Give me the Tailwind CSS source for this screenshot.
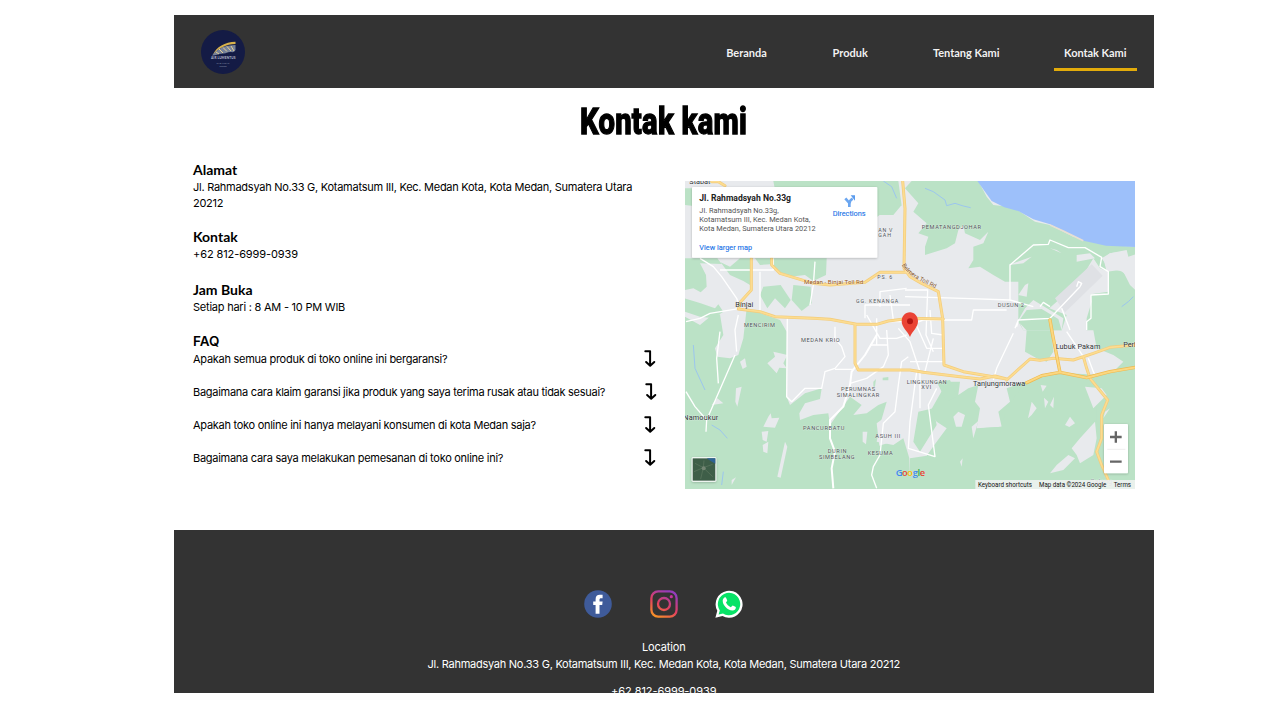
<!DOCTYPE html>
<html lang="id">
<head>
<meta charset="utf-8">
<title>Kontak Kami</title>
<script src="https://cdn.jsdelivr.net/npm/@tailwindcss/browser@4"></script>
</head>
<body class="bg-white text-black font-['Inter',sans-serif] h-[708px] overflow-hidden">
<svg class="hidden">
  <symbol id="turn" viewBox="0 0 14 18"><path d="M1.300 1.300H6.100V15M2.100 12L6.200 15.800L10.300 12" fill="none" stroke="#000" stroke-width="2" stroke-linecap="round" stroke-linejoin="round"/></symbol>
</svg>
<div class="ml-[173.5px] mt-[14.5px] w-[980.5px] h-[678.5px] overflow-hidden flex flex-col">
  <header class="h-[73.5px] shrink-0 bg-[#333] flex items-start justify-between pl-[27.5px] pr-[17px]">
    <svg class="mt-[15px] size-[44px]" viewBox="0 0 44 44">
      <circle cx="22" cy="22" r="22" fill="#141b45"/>
      <path d="M12 25C15 17 24 12 34.500 11.800V14C25 14 18 18 12 25Z" fill="#d9b24a"/>
      <path d="M11 25.500C16 19 24 15 34.500 15V20C33 23 31 22 29 22C26 22 25 24 22 23.500C17 24 15 25.500 11 25.500Z" fill="#77829a"/>
      <path d="M15 22l3 2M18 19l4 4M22 17.500l4 4M26 16.500l4 4.500M30 16l3 5" stroke="#e7d193" stroke-width="1"/>
      <text x="10" y="28.700" font-family="Lato" font-weight="700" font-size="3.200" fill="#b9bfd0" textLength="24.500">AIR LUMENTUS</text>
      <text x="15.500" y="34.300" font-family="Lato" font-size="2.400" fill="#8f96b0" textLength="13">THE LIGHT</text>
      <text x="18.500" y="36.800" font-family="Lato" font-size="2.200" fill="#8f96b0" textLength="7">STORE</text>
    </svg>
    <nav class="flex gap-[43.5px] mt-[26px] font-['Lato'] font-bold text-[11px] leading-[24px] text-white/95 text-center">
      <a class="w-[63px] h-[30px]">Beranda</a>
      <a class="w-[57.500px] h-[30px]">Produk</a>
      <a class="w-[87.500px] h-[30px] whitespace-nowrap">Tentang Kami</a>
      <a class="w-[83.500px] h-[30px] border-b-3 border-[#e2ab0b] whitespace-nowrap tracking-[-0.05px]">Kontak Kami</a>
    </nav>
  </header>
  <h1 class="h-[66px] pt-[2px] shrink-0 flex items-center justify-center font-['Roboto'] font-extrabold text-[36.500px] whitespace-nowrap"><span class="scale-x-[.8] [-webkit-text-stroke:1.3px_#000] tracking-[.35px]">Kontak kami</span></h1>
  <main class="h-[376px] shrink-0 flex pl-[19.5px] text-[11px]">
    <section class="w-[466px] mt-[6.500px] leading-[16.5px] tracking-[-0.275px]">
      <h2 class="font-['Lato'] font-bold text-[14px] leading-[17px] h-[18px] tracking-normal">Alamat</h2>
      <p class="h-[49.500px] w-[455px] tracking-[-0.262px]">Jl. Rahmadsyah No.33 G, Kotamatsum III, Kec. Medan Kota, Kota Medan, Sumatera Utara 20212</p>
      <h2 class="font-['Lato'] font-bold text-[14px] leading-[17px] h-[18px] tracking-normal">Kontak</h2>
      <p class="h-[34.500px] tracking-[-0.1px]">+62 812-6999-0939</p>
      <h2 class="font-['Lato'] font-bold text-[14px] leading-[17px] h-[18px] tracking-normal">Jam Buka</h2>
      <p class="h-[34.500px] tracking-[-0.23px]">Setiap hari : 8 AM - 10 PM WIB</p>
      <h2 class="font-semibold text-[13.500px] leading-[17px] h-[18px] tracking-normal">FAQ</h2>
      <div class="flex flex-col gap-[16.500px]">
        <div class="flex justify-between pr-[1.500px]"><p>Apakah semua produk di toko online ini bergaransi?</p><svg class="w-[14px] h-[18px] -my-px"><use href="#turn"/></svg></div>
        <div class="flex justify-between pr-[.5px]"><p>Bagaimana cara klaim garansi jika produk yang saya terima rusak atau tidak sesuai?</p><svg class="w-[14px] h-[18px] -my-px"><use href="#turn"/></svg></div>
        <div class="flex justify-between pr-[1.500px]"><p>Apakah toko online ini hanya melayani konsumen di kota Medan saja?</p><svg class="w-[14px] h-[18px] -my-px"><use href="#turn"/></svg></div>
        <div class="flex justify-between pr-[1.500px]"><p>Bagaimana cara saya melakukan pemesanan di toko online ini?</p><svg class="w-[14px] h-[18px] -my-px"><use href="#turn"/></svg></div>
      </div>
    </section>
    <svg class="ml-[26px] mt-[26.500px] w-[450px] h-[308px] shrink-0" viewBox="15 18 1350 924" font-family="Roboto">
      <defs><filter id="sh" x="-10%" y="-10%" width="120%" height="130%"><feDropShadow dx="0" dy="2" stdDeviation="3" flood-opacity=".25"/></filter></defs>
      <rect x="14" y="18" width="1352" height="925" fill="#e8eaed"/>
      <!-- vegetation -->
      <g fill="#bbe2c6">
        <path d="M280 18H655L665 92L640 88L592 125H300ZM14 40H60V95L14 90ZM592 75L665 90L640 120H592Z"/>
        <path d="M14 250H112L125 267L60 265L78 300L80 335L62 352L40 340L14 345ZM14 370L62 385L105 400L115 388L130 410L100 430L60 425L14 410ZM122 262L150 275L180 250H210V330L190 318L150 300ZM225 250H440L438 300L400 318L375 300L330 305L300 292L270 268L240 270ZM250 335L302 330L332 375L315 400L285 370L262 400L240 360ZM340 330L392 335L395 385L365 408L335 375Z"/>
        <path d="M14 425L60 450L90 425L120 418L130 480L105 520L112 545L150 550L175 540L190 490L200 400L235 412L300 435L320 470V665L330 690L375 655L425 640L420 672L375 685L358 715L360 735L400 720L445 715L450 750L510 665L545 690L520 720L560 715L595 690L620 680L600 750L590 800L640 810L670 790L688 850L691 943H14Z"/>
        <path d="M580 620L588 612L585 635L580 635ZM608 608L625 606V616L608 616Z"/>
        <path d="M735 18H895L920 65L940 90L1000 97L1065 140L1110 150L1180 185L1280 210L1366 215V238L1345 245L1340 225L1290 235L1265 250L1285 280L1330 290L1350 330L1366 345V466H1220V430L1235 380L1232 358L1285 350V290L1260 280L1240 250L1210 300L1130 380L1108 400L1160 420L1145 466H1030L1015 440V320H975L940 300L900 275L865 280L880 255V215L910 205L925 170L900 195L855 175L850 150L835 165L825 205L800 220L735 240V215L745 185L715 175L740 145L700 110L715 85L675 40L695 18Z"/>
        <path d="M1040 465H1114L1120 530L1100 560L1070 550L1035 530ZM1240 465H1366V943H690V850L740 842L770 800L800 760L770 740L750 710L790 640L800 620L840 620L835 660L865 640L895 630L885 680L900 700L890 760L965 755L955 710L990 680L980 640L1050 615L1115 592L1260 600L1300 590L1330 560L1300 540L1250 520Z"/>
        <path d="M1030 630L1100 600H1250V740L1366 800V943H900V760L965 755L980 700Z"/>
        <path d="M715 710L760 700L770 750L720 830L700 800ZM770 620L810 615L830 665L800 680Z"/>
      </g>
      <g fill="#e8eaed">
        <path d="M262 565L285 545L280 530L300 535L322 540L310 565L320 580L298 578L290 595ZM168 640L185 635L172 695L166 680ZM180 560L195 550L200 575L188 582ZM112 670L130 685L95 690ZM265 725L272 715L275 730L298 728L285 758L250 755ZM245 770L265 768L260 800L248 795ZM315 800L322 815L302 908L292 905ZM248 810L265 800L262 835L250 830ZM548 770L562 770L558 808L548 800ZM155 915L168 907L155 930ZM590 745L645 705L640 760L610 780L635 800L598 812Z"/>
        <path d="M820 725L835 710L855 720L845 755L828 755ZM875 755L895 738L880 790ZM840 860L848 850L845 875ZM1044 730L1055 680L1070 700L1055 720ZM1082 630L1100 632L1088 650ZM1092 668L1105 680L1095 700ZM1110 690L1122 665L1120 700ZM1155 750L1170 725L1185 745L1168 756ZM1215 635L1265 640L1280 660L1240 700ZM1175 820L1200 790L1245 740L1250 790L1240 840L1200 865L1190 840ZM1110 895L1130 870L1165 840L1185 850L1150 885ZM1270 730L1290 700L1275 710Z"/>
        <path d="M1015 435L1035 400L1060 375L1150 430L1145 466L1030 466ZM1110 220L1130 225L1145 235ZM1190 240L1230 235L1245 250L1190 260ZM1270 250L1290 235L1340 228L1345 270L1365 265L1350 310L1320 285L1280 290ZM985 270L1055 245L1030 265ZM1035 330L1045 325L1040 365L1015 360Z"/>
      </g>
      <path d="M1015 440L1040 405L1085 402L1135 432L1145 466H1040Z" fill="#bbe2c6"/>
      <path d="M1125 370L1235 268L1268 302L1155 412Z" fill="#dfe1e5"/>
      <path d="M892 18H1366V216L1278 212L1210 197L1150 168L1110 148L1060 133L1015 108L973 97L935 78Z" fill="#9dc0fa"/>
      <path d="M1110 150L1150 168L1210 197" stroke="#e7dfd3" stroke-width="5" fill="none"/>
      <path d="M735 40L760 50L795 75L800 92L825 85L850 93L872 98M610 18L635 35L650 70M1325 395L1345 380L1360 365M95 750L120 765L142 790M40 510L45 580L75 645M130 890L125 930" stroke="#9cc6ee" stroke-width="3" fill="none"/>
      <!-- minor roads -->
      <g fill="none" stroke="#fff" stroke-width="4" stroke-linejoin="round">
        <path d="M60 250L100 275L125 305L170 370L180 400L90 415L60 430L18 440M120 470L110 550L115 625M170 530L165 465L175 420M165 540L80 735L45 695L18 650M80 735L78 770M120 285H280V250M240 290L240 410M322 430L320 665L335 680L375 640L425 640L435 590L465 580L495 545L485 515L465 490V455M390 390L400 330L405 260"/>
        <path d="M590 480L555 540L515 590L510 630L490 695L450 735V790L465 830L455 880L460 940" stroke-width="6"/>
        <path d="M510 625L560 610L610 575L625 540L620 465M465 583H520M555 430V390H690M600 395V350L680 340M640 435L630 360M685 545L665 560L655 630L645 710L610 745L600 840L580 875L575 900L590 940M570 510L625 510M560 420L600 490H650L680 480M620 440H680M590 430V510"/>
        <path d="M675 345H743L738 480L760 530M675 365L850 370L990 375L1060 395M675 455L730 435H875L880 405H980M750 405L755 475L790 480M655 460L690 500L720 590V700M700 430L740 520H790M690 560H790M710 590L690 740L685 820L765 845L745 690L770 640M735 590L760 490M1010 455L1015 435L1110 430L1200 335M1015 435L1005 460M1000 475L950 580L940 615M990 375V270L1060 210L1105 208L1110 195L1165 218H1215L1265 247L1260 275L1285 290V357L1233 360V430L1220 440V465M1110 395L1090 382L1080 395M1145 400L1170 465M1160 470L1210 545M1225 550L1240 590L1245 600M1200 335L1205 325L1195 320L1190 335"/>
      </g>
      <!-- highways -->
      <g fill="none" stroke-linejoin="round" stroke-linecap="round">
        <path d="M214 250V345L182 380L175 402L240 410L285 425L400 430L450 433L530 448L590 448L625 438L690 430L790 432M275 250L275 270L300 295L400 325L450 330L555 322L600 292H690M668 18L675 100L672 280L690 305L725 325L775 350L788 430L792 570L850 590L980 612L945 603L900 612L840 605L730 592L690 585L535 585L525 565V450M95 20H115L135 32M980 615L1050 552L1080 556L1120 550L1180 555L1240 535L1290 517L1366 510M1210 545L1220 580L1230 610L1283 675L1265 720V790L1250 830L1265 870L1285 915" stroke="#f3cc7b" stroke-width="9"/>
        <path d="M214 250V345L182 380L175 402L240 410L285 425L400 430L450 433L530 448L590 448L625 438L690 430L790 432M275 250L275 270L300 295L400 325L450 330L555 322L600 292H690M668 18L675 100L672 280L690 305L725 325L775 350L788 430L792 570L850 590L980 612L945 603L900 612L840 605L730 592L690 585L535 585L525 565V450M95 20H115L135 32M980 615L1050 552L1080 556L1120 550L1180 555L1240 535L1290 517L1366 510M1210 545L1220 580L1230 610L1283 675L1265 720V790L1250 830L1265 870L1285 915" stroke="#fcdc90" stroke-width="5"/>
        <path d="M1110 435L1118 480L1140 592M1040 623L1085 602L1140 592L1220 608L1290 590L1366 577" stroke="#eeb94f" stroke-width="10"/>
        <path d="M1110 435L1118 480L1140 592M1040 623L1085 602L1140 592L1220 608L1290 590L1366 577" stroke="#fbd780" stroke-width="6"/>
      </g>
      <!-- place names -->
      <g font-size="18" fill="#4f5358" stroke="#fff" stroke-width="2" stroke-opacity=".5" paint-order="stroke">
        <text x="528" y="383" font-size="16" textLength="127">GG. KENANGA</text>
        <text x="192" y="457" font-size="17" textLength="93">MENCIRIM</text>
        <text x="592" y="312" font-size="16" textLength="45">PS. 6</text>
        <text x="595" y="171" font-size="16" textLength="42">AN V</text>
        <text x="595" y="187" font-size="16" textLength="38">GAH</text>
        <text x="725" y="161" font-size="17" textLength="178">PEMATANGDJOHAR</text>
        <text x="953" y="397" font-size="17" textLength="79">DUSUN 2</text>
        <text x="363" y="501" font-size="17" textLength="116">MEDAN KRIO</text>
        <text x="483" y="649" font-size="17" textLength="102">PERUMNAS</text>
        <text x="470" y="665" font-size="17" textLength="128">SIMALINGKAR</text>
        <text x="369" y="765" font-size="17" textLength="124">PANCURBATU</text>
        <text x="586" y="788" font-size="17" textLength="75">ASUH III</text>
        <text x="443" y="834" font-size="17" textLength="57">DURIN</text>
        <text x="417" y="851" font-size="17" textLength="107">SIMBELANG</text>
        <text x="563" y="841" font-size="17" textLength="75">KESUMA</text>
        <text x="680" y="626" font-size="17" textLength="120">LINGKUNGAN</text>
        <text x="724" y="643" font-size="17" textLength="30">XVI</text>
        <g fill="#303438" font-size="22">
          <text x="28" y="27" textLength="63">Stabat</text>
          <text x="166" y="396" textLength="54">Binjai</text>
          <text x="10" y="736" textLength="105">Namoukur</text>
          <text x="879" y="633" textLength="157">Tanjungmorawa</text>
          <text x="1127" y="522" textLength="134">Lubuk Pakam</text>
          <text x="1330" y="517" textLength="68">Perbau</text>
          <text x="1230" y="928" fill="#9aa0a6" textLength="66">Galang</text>
        </g>
        <path id="toll" d="M664 266C680 302 718 318 790 350" fill="none" stroke="none"/>
        <text fill="#7d4c20" font-size="18"><textPath href="#toll" startOffset="4">Belmera Toll Rd</textPath></text>
        <text x="372" y="327" fill="#955519" font-size="18.500" textLength="178">Medan - Binjai Toll Rd</text>
      </g>
      <!-- marker -->
      <path d="M690 412C675 412 665 424 665 439C665 458 684 470 690 486C696 470 714 458 714 439C714 424 704 412 690 412Z" fill="#ea4335"/>
      <circle cx="690" cy="439" r="9" fill="#b31412"/>
      <!-- info card -->
      <g filter="url(#sh)"><rect x="36" y="36" width="556" height="212" rx="3" fill="#fff"/></g>
      <text x="58" y="79" font-size="25" font-weight="700" fill="#222" textLength="275" lengthAdjust="spacingAndGlyphs">Jl. Rahmadsyah No.33g</text>
      <g font-size="21" fill="#555">
        <text x="58" y="115" textLength="238" lengthAdjust="spacingAndGlyphs">Jl. Rahmadsyah No.33g,</text>
        <text x="58" y="142" textLength="333" lengthAdjust="spacingAndGlyphs">Kotamatsum III, Kec. Medan Kota,</text>
        <text x="58" y="168" textLength="349" lengthAdjust="spacingAndGlyphs">Kota Medan, Sumatera Utara 20212</text>
      </g>
      <text x="58" y="224" font-size="21" fill="#1a73e8" stroke="#1a73e8" stroke-width=".3" textLength="158" lengthAdjust="spacingAndGlyphs">View larger map</text>
      <text x="458" y="123" font-size="21" fill="#1a73e8" stroke="#1a73e8" stroke-width=".3" textLength="99" lengthAdjust="spacingAndGlyphs">Directions</text>
      <path d="M508 96V84L496 70M508 87Q508 76 518 71" stroke="#6ba6f0" stroke-width="8" fill="none"/>
      <path d="M512 61H525V77Z" fill="#5a9bed"/>
      <!-- satellite toggle -->
      <g filter="url(#sh)"><rect x="35" y="847" width="74" height="73" rx="4" fill="#fff"/></g>
      <rect x="38" y="850" width="68" height="67" fill="#3e5e48"/>
      <path d="M80 850H106V866L92 858Z" fill="#2d6293"/>
      <path d="M45 865L70 878L98 868M70 878L62 912M72 880L98 905M42 890L70 878L72 856" stroke="#58735c" stroke-width="2.500" fill="none"/>
      <circle cx="71" cy="880" r="6" fill="#748674"/>
      <!-- zoom control -->
      <g filter="url(#sh)"><rect x="1272" y="747" width="72" height="148" rx="3" fill="#fff"/></g>
      <path d="M1282 823H1336" stroke="#e6e6e6" stroke-width="2"/>
      <path d="M1290 786H1325M1307.500 769V803M1290 860H1325" stroke="#666" stroke-width="7"/>
      <!-- attribution -->
      <text x="647" y="902" font-family="Open Sans" font-weight="600" font-size="28" textLength="88" fill="#4285f4">G<tspan fill="#ea4335">o</tspan><tspan fill="#fbbc04">o</tspan><tspan fill="#4285f4">g</tspan><tspan fill="#34a853">l</tspan><tspan fill="#ea4335">e</tspan></text>
      <path d="M886 915H1366V943H886Z" fill="#f5f5f5" fill-opacity=".8"/>
      <g font-size="19" fill="#111">
        <text x="894" y="935" textLength="162" lengthAdjust="spacingAndGlyphs">Keyboard shortcuts</text>
        <text x="1077" y="935" textLength="202" lengthAdjust="spacingAndGlyphs">Map data ©2024 Google</text>
        <text x="1301" y="935" textLength="52" lengthAdjust="spacingAndGlyphs">Terms</text>
      </g>
    </svg>
  </main>
  <footer class="flex-1 bg-[#333] text-white text-center text-[11px] leading-[16.500px] flex flex-col items-center">
    <div class="mt-[59.500px] flex gap-[37.500px] h-[28px]">
      <svg class="size-[28px]" viewBox="0 0 28 28"><circle cx="14" cy="14" r="13.800" fill="#3f5b9a"/><path d="M11.600 23.800V15H9.200V11.500H11.600V9.200C11.600 6 13.200 4.700 15.800 4.700H18.600V8.200H17C15.900 8.200 15.500 8.700 15.500 9.700V11.500H18.600L18.200 15H15.500V23.800Z" fill="#fff"/></svg>
      <svg class="size-[28px]" viewBox="0 0 28 28" fill="none"><defs><linearGradient id="ig" gradientUnits="userSpaceOnUse" x1="3" y1="27" x2="17" y2="1"><stop stop-color="#f99b22"/><stop offset=".5" stop-color="#e2405f"/><stop offset="1" stop-color="#963cba"/></linearGradient></defs><rect x="1.400" y="1.400" width="25.200" height="25.200" rx="6.800" stroke="url(#ig)" stroke-width="2.300"/><circle cx="14" cy="14" r="6" stroke="url(#ig)" stroke-width="2.300"/><circle cx="21.300" cy="6.700" r="1.600" fill="#c835a0"/></svg>
      <svg class="size-[28px]" viewBox="0 0 28 28"><path d="M.4 27.800L2.300 20.800A13.500 13.500 0 1 1 7.500 26Z" fill="#fff"/><path d="M3.600 24.600L4.800 20.400A11.200 11.200 0 1 1 8 23.500Z" fill="#08e267"/><path d="M9.500 7.500C10.500 7 11 7.400 11.400 8.500L12.200 10.600C12.300 11.300 11.200 12 11 12.600C12 14.800 13.500 16.300 15.800 17.200C16.600 17 17.100 15.700 17.800 15.600L20.800 17C21.300 18.900 19.600 20.600 17.500 20.600C12.300 20.300 7.500 15 7.700 10.500C7.900 9 8.600 8 9.500 7.500Z" fill="#fff"/></svg>
    </div>
    <p class="mt-[21.500px] tracking-[-0.15px]">Location</p>
    <p class="tracking-[-0.26px]">Jl. Rahmadsyah No.33 G, Kotamatsum III, Kec. Medan Kota, Kota Medan, Sumatera Utara 20212</p>
    <p class="mt-[11px] tracking-[-0.08px]">+62 812-6999-0939</p>
  </footer>
</div>
</body>
</html>
